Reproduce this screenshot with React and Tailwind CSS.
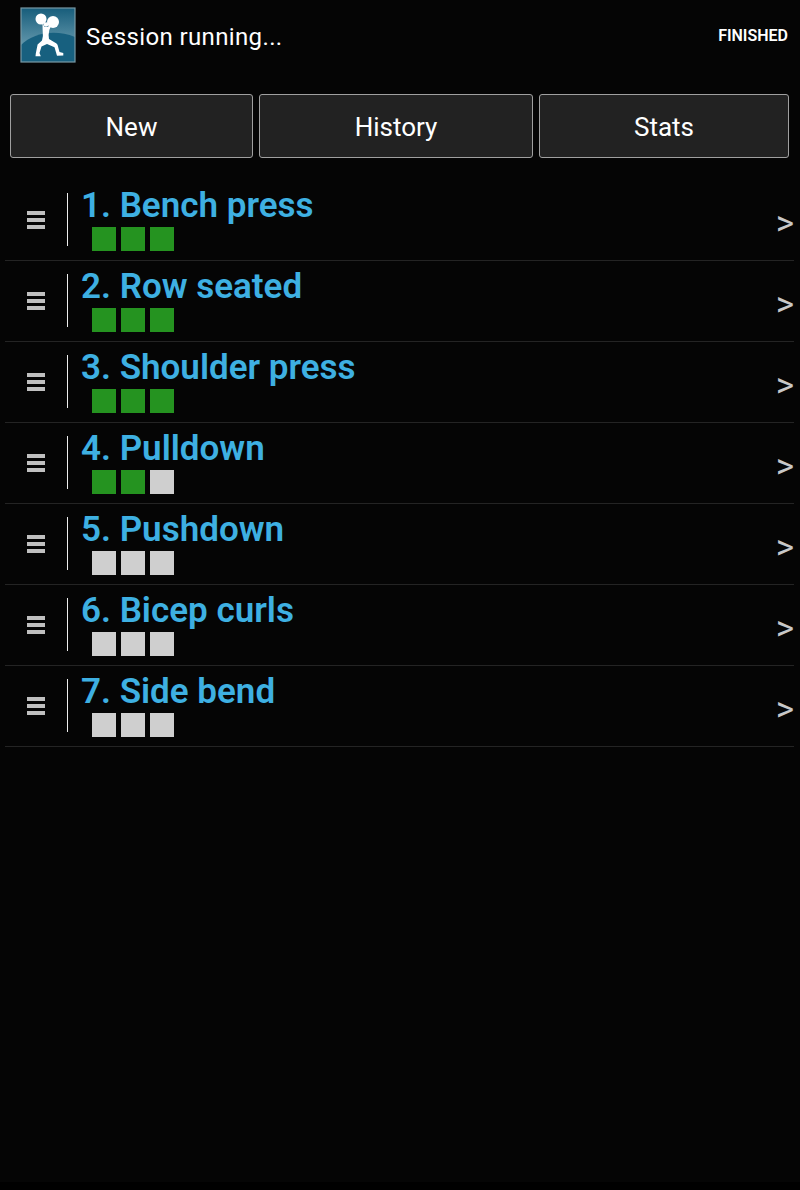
const exercises = [
  { name: 'Bench press', done: 3 },
  { name: 'Row seated', done: 3 },
  { name: 'Shoulder press', done: 3 },
  { name: 'Pulldown', done: 2 },
  { name: 'Pushdown', done: 0 },
  { name: 'Bicep curls', done: 0 },
  { name: 'Side bend', done: 0 },
];

function Logo() {
  return (
    <svg className="block h-[56px] w-[56px] shrink-0" viewBox="0 0 56 56">
      <defs>
        <linearGradient id="sky" x1="0" y1="0" x2="0" y2="1">
          <stop offset="0" stopColor="#175d7b" />
          <stop offset="0.65" stopColor="#5e94a9" />
        </linearGradient>
      </defs>
      <rect x="1" y="1" width="54" height="54" fill="url(#sky)" />
      <path d="M1 38C13 26 35 22 55 30V55H1Z" fill="#17607f" />
      <rect x="1" y="1" width="54" height="54" fill="none" stroke="#7899a6" strokeWidth="1.2" />
      <circle cx="21" cy="12" r="5.5" fill="#fff" />
      <circle cx="33" cy="15" r="6" fill="#fff" />
      <circle cx="26" cy="17.5" r="2.3" fill="#fff" />
      <path d="M22.5 16L24.5 20L28 20L30 17L31 19L29.3 23L28.6 28L29 32L36.5 36.5Q37.8 37.5 38 39.5L39.5 45L43.3 46L43.3 48.6L37 48.8L34.5 40.2L27 37L21.5 39.5L19.5 46L20.8 49.2L15.5 49.2L15.8 46.5L17.6 37.5L22 33.5L22.9 29L22.6 22Z" fill="#fff" />
    </svg>
  );
}

function Tab({ children, className }) {
  return (
    <button className={`h-[64px] rounded-[3px] border border-[#a0a0a0] bg-[#222222] text-[26px] leading-[64px] text-white ${className}`}>
      {children}
    </button>
  );
}

function Row({ index, name, done }) {
  return (
    <li className="flex h-[81px] border-b border-[#242424] pt-[13px]">
      <div className="mt-[18px] ml-[22px] flex h-[18px] w-[18px] flex-col justify-between">
        <span className="h-1 bg-[#c0c0c0]" />
        <span className="h-1 bg-[#c0c0c0]" />
        <span className="h-1 bg-[#c0c0c0]" />
      </div>
      <div className="ml-[22px] h-[53px] w-px bg-[#eeeeee]" />
      <div className="-mt-[9px] ml-[13px] flex-1">
        <h2 className="h-[43px] text-[35px] leading-[43px] font-semibold whitespace-nowrap text-[#3eb0e2]">
          {index}. {name}
        </h2>
        <div className="ml-[11px] flex gap-[5px]">
          {[0, 1, 2].map((i) => (
            <span key={i} className={`h-6 w-6 ${i < done ? 'bg-[#259320]' : 'bg-[#cfcfcf]'}`} />
          ))}
        </div>
      </div>
      <span className="mt-[13px] text-[35px] leading-[36px] text-[#c8c8c8]">&gt;</span>
    </li>
  );
}

export default function App() {
  return (
    <div className="flex h-[1190px] w-[800px] flex-col border-b-8 border-black bg-[#050505] font-['Roboto',sans-serif]">
      <header className="flex h-[94px] items-start pt-[7px] pr-[12px] pl-[20px] text-white">
        <Logo />
        <h1 className="ml-[10px] flex-1 pt-[14px] text-[24px] leading-[32px] tracking-[0.37px]">Session running...</h1>
        <span className="pt-[19px] text-[16px] leading-[20px] font-semibold">FINISHED</span>
      </header>
      <nav className="flex gap-[6px] px-[10px]">
        <Tab className="w-[243px]">New</Tab>
        <Tab className="w-[274px]">History</Tab>
        <Tab className="w-[250px]">Stats</Tab>
      </nav>
      <ul className="mt-[22px] ml-[5px] w-[789px]">
        {exercises.map((e, i) => (
          <Row key={e.name} index={i + 1} {...e} />
        ))}
      </ul>
    </div>
  );
}
